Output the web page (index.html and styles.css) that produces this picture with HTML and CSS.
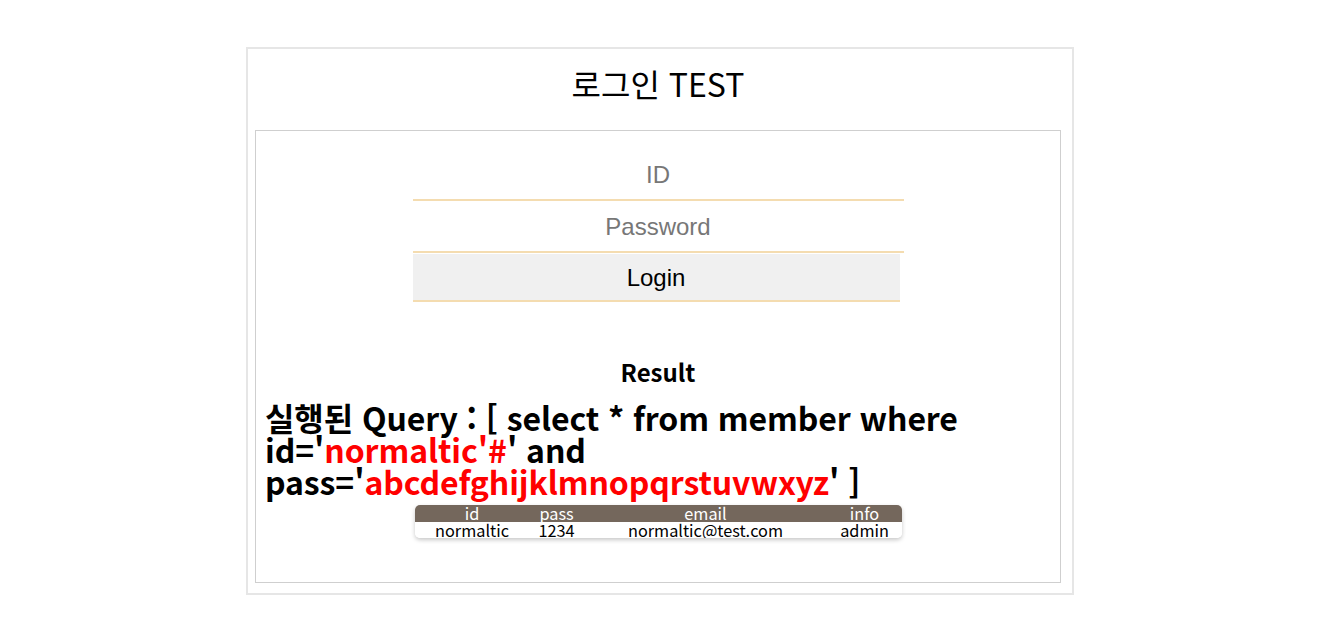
FILE: index.html
```html
<!DOCTYPE html>
<html lang="ko">
<head>
<meta charset="utf-8">
<title>로그인 TEST</title>
<link rel="stylesheet" href="styles.css">
</head>
<body>
<div class="page">
  <div class="outer">
    <h1 class="title">로그인 TEST</h1>
    <div class="inner">
      <form class="login">
        <input class="field" type="text" placeholder="ID">
        <input class="field" type="password" placeholder="Password">
        <button class="btn" type="button">Login</button>
      </form>
      <div class="result">Result</div>
      <h2 class="query">실행된 Query : [ select * from member where id='<span class="red">normaltic'#</span>' and pass='<span class="red">abcdefghijklmnopqrstuvwxyz</span>' ]</h2>
      <table class="tbl">
        <colgroup>
          <col class="c1"><col class="c2"><col class="c3"><col class="c4">
        </colgroup>
        <thead>
          <tr><th>id</th><th>pass</th><th>email</th><th>info</th></tr>
        </thead>
        <tbody>
          <tr><td>normaltic</td><td>1234</td><td>normaltic@test.com</td><td>admin</td></tr>
        </tbody>
      </table>
    </div>
  </div>
</div>
</body>
</html>
```

FILE: styles.css
```css
* { box-sizing: border-box; }
html, body { margin: 0; padding: 0; background: #fff; }
body { font-family: "Noto Sans CJK KR", "Noto Sans", sans-serif; color: #000; }

.page { padding-top: 47px; display: flex; justify-content: center; }

.outer {
  width: 828px;
  border: 2px solid #e6e6e6;
  padding: 0 11px 10px 7px;
}

.title {
  margin: 0;
  padding-top: 14px;
  height: 81px;
  font-size: 32px;
  line-height: 40px;
  font-weight: 400;
  text-align: center;
}

.inner {
  border: 1px solid #cfcfcf;
  padding: 18px 9px 44px 9px;
  display: flex;
  flex-direction: column;
  align-items: center;
}

.login { display: flex; flex-direction: column; align-items: center; width: 491px; }

.field {
  width: 491px;
  height: 52px;
  border: none;
  border-bottom: 2px solid #f4dcb0;
  outline: none;
  font-family: "Liberation Sans", Arial, sans-serif;
  font-size: 24px;
  text-align: center;
  padding: 2px 0 0 0;
  background: #fff;
}
.field::placeholder { color: #777; }

.btn {
  width: 487px;
  height: 48px;
  margin-left: -4px;
  margin-top: 1px;
  border: none;
  border-bottom: 2px solid #f4dcb0;
  background: #f0f0f0;
  font-family: "Liberation Sans", Arial, sans-serif;
  font-size: 24px;
  color: #000;
  padding: 2px 0 0 0;
}

.result {
  margin-top: 55px;
  font-size: 24px;
  line-height: 30px;
  font-weight: 700;
}

.query {
  align-self: stretch;
  margin: 14px 0 0 0;
  font-size: 32px;
  line-height: 32px;
  font-weight: 700;
  letter-spacing: -0.1px;
}
.red { color: #f00; }

.tbl {
  margin-top: 8px;
  width: 487px;
  border-collapse: separate;
  border-spacing: 0;
  table-layout: fixed;
  font-size: 16.3px;
  line-height: 17px;
  border-radius: 5px;
  box-shadow: 0 2px 4px rgba(0,0,0,0.22);
  overflow: hidden;
}
.c1 { width: 115px; }
.c2 { width: 54px; }
.c3 { width: 244px; }
.c4 { width: 74px; }
.tbl th {
  background: #74675c;
  color: #fff;
  font-weight: 400;
  padding: 0;
  height: 17px;
  line-height: 17px;
  text-align: center;
}
.tbl td {
  padding: 0;
  height: 16px;
  line-height: 16px;
  text-align: center;
  background: #fff;
}
```
